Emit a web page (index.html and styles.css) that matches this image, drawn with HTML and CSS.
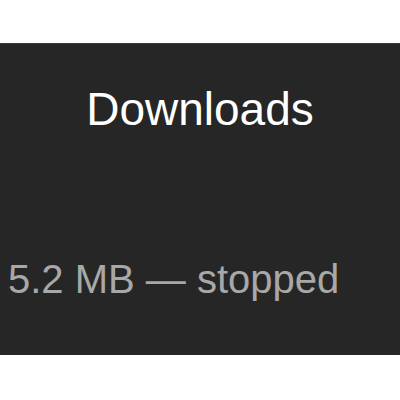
FILE: index.html
```html
<!DOCTYPE html>
<html lang="en">
<head>
    <meta charset="UTF-8">
    <title>Downloads</title>
    <link rel="stylesheet" href="styles.css">
</head>
<body>
    <div class="panel">
        <h1 class="title">Downloads</h1>
        <div class="status">5.2 MB — stopped</div>
    </div>
</body>
</html>
```

FILE: styles.css
```css
body {
    margin: 0;
    background: #ffffff;
    font-family: 'Liberation Sans', Arial, sans-serif;
}
.panel {
    margin-top: 43px;
    height: 312px;
    box-sizing: border-box;
    padding-top: 38px;
    background: #262626;
    border-top: 1px solid #3a3a3a;
}
.title {
    margin: 0;
    font-size: 46px;
    font-weight: normal;
    color: #ffffff;
    text-align: center;
}
.status {
    margin-top: 121px;
    padding-left: 8px;
    font-size: 40px;
    color: #a8a8a8;
}
```
